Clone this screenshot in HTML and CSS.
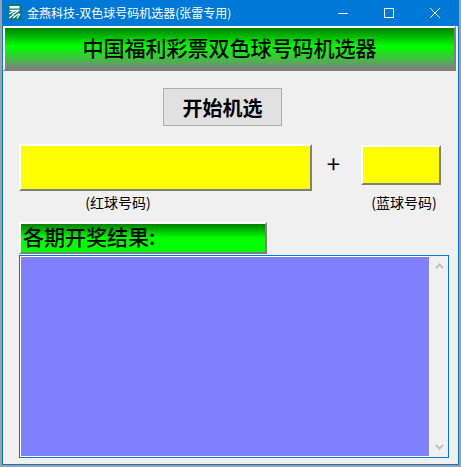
FILE: index.html
```html
<!DOCTYPE html>
<html lang="zh-CN">
<head>
<meta charset="UTF-8" />
<title>金燕科技-双色球号码机选器(张雷专用)</title>
<link rel="stylesheet" href="styles.css">
</head>
<body>
  <div class="window">
    <div class="titlebar">
      <svg class="app-icon" viewBox="0 0 15 16" width="15" height="16">
        <rect width="15" height="16" fill="#0b7a70"/>
        <path d="M2.5 2 H12.5 V4.5 H2.5 Z" fill="#fff"/>
        <path d="M2.5 6.5 H12.5 M2 10 L8 6.5 M5 11 L11 7 M2 14 L7 10.5 M6 14 L12 9.5 M10 14.5 L13 10" stroke="#fff" stroke-width="1.3" fill="none"/>
      </svg>
      <span class="title-text">金燕科技-双色球号码机选器(张雷专用)</span>
      <div class="controls">
        <svg viewBox="0 0 46 22" width="46" height="22"><path d="M18 13.5 H28" stroke="#fff" fill="none"/></svg>
        <svg viewBox="0 0 46 22" width="46" height="22"><rect x="18.5" y="8.5" width="9" height="9" stroke="#fff" fill="none"/></svg>
        <svg viewBox="0 0 46 22" width="46" height="22"><path d="M18 8 L28 18 M28 8 L18 18" stroke="#fff" fill="none"/></svg>
      </div>
    </div>
    <div class="content">
      <h1 class="banner">中国福利彩票双色球号码机选器</h1>
      <button class="start-btn">开始机选</button>
      <div class="balls">
        <div class="ball-col red-col">
          <div class="ball-field red-field"></div>
          <div class="ball-label">(红球号码)</div>
        </div>
        <div class="plus">+</div>
        <div class="ball-col blue-col">
          <div class="ball-field blue-field"></div>
          <div class="ball-label">(蓝球号码)</div>
        </div>
      </div>
      <div class="results-title">各期开奖结果:</div>
      <div class="results-box">
        <div class="results-list"></div>
        <div class="scrollbar">
          <svg viewBox="0 0 9 6" width="9" height="6"><path d="M1 5 L4.5 1.5 L8 5" stroke="#c0c0c0" stroke-width="2" fill="none"/></svg>
          <svg viewBox="0 0 9 6" width="9" height="6"><path d="M1 1 L4.5 4.5 L8 1" stroke="#c0c0c0" stroke-width="2" fill="none"/></svg>
        </div>
      </div>
    </div>
  </div>
</body>
</html>
```
FILE: styles.css
```css
* {
  box-sizing: border-box;
}
html, body {
  height: 100%;
  margin: 0;
  background: #a0a0a0;
  font-family: "Noto Sans CJK SC", sans-serif;
}

.window {
  width: 457px;
  height: 465px;
  margin-left: 2px;
  display: flex;
  flex-direction: column;
  background: #0078d7;
}

.titlebar {
  height: 26px;
  flex: none;
  display: flex;
  align-items: center;
  padding-left: 5px;
  color: #fff;
}

.app-icon {
  margin: -3px 5px 0 0;
}

.title-text {
  font-size: 12px;
  flex: 1;
  margin-top: -2px;
}

.controls {
  display: flex;
  margin: 0 1px 4px 0;
}

.content {
  flex: 1;
  margin: 0 1px 1px;
  background: #f0f0f0;
  display: flex;
  flex-direction: column;
  align-items: flex-start;
}

.banner {
  margin: 0;
  width: 453px;
  height: 45px;
  flex: none;
  text-align: center;
  font-size: 21px;
  line-height: 39px;
  font-weight: 500;
  color: #000;
  background: linear-gradient(#008000, #00ff00 45%, #40c040 75%, #808080);
  border: 2px solid;
  border-color: #fff #808080 #808080 #fff;
}

.start-btn {
  width: 119px;
  height: 38px;
  margin: 17px 0 0 160px;
  padding: 0;
  font: 700 20px "Noto Sans CJK SC", sans-serif;
  color: #000;
  background: #e1e1e1;
  border: 1px solid #adadad;
}

.balls {
  display: flex;
  margin: 18px 0 0 16px;
}

.ball-col {
  display: flex;
  flex-direction: column;
  align-items: center;
}

.ball-field {
  background: #ff0;
  border: 2px solid;
  border-color: #fff #808080 #808080 #fff;
}

.red-field {
  width: 293px;
  height: 47px;
}

.blue-field {
  width: 80px;
  height: 40px;
  margin-top: 1px;
}

.ball-label {
  font-size: 14px;
  line-height: 16px;
  margin-top: 3px;
  color: #000;
}

.red-col .ball-label {
  margin-right: 95px;
}

.blue-col .ball-label {
  margin-top: 9px;
  margin-left: 6px;
}

.plus {
  width: 49px;
  padding-right: 6px;
  text-align: center;
  font-size: 24px;
  line-height: 36px;
  height: 36px;
  margin-top: 1px;
  color: #000;
}

.results-title {
  width: 248px;
  height: 32px;
  margin: 12px 0 0 16px;
  padding-left: 2px;
  font-size: 21px;
  line-height: 24px;
  font-weight: 500;
  color: #000;
  background: linear-gradient(#008000, #00ff00 50%);
  border: 2px solid;
  border-color: #fff #808080 #808080 #fff;
}

.results-box {
  width: 430px;
  height: 203px;
  margin: 1px 0 0 16px;
  display: flex;
  border: 1px solid #0078d7;
  background: #f0f0f0;
}

.results-list {
  flex: 1;
  background: #8080ff;
  border: 1px solid #fff;
}

.scrollbar {
  width: 18px;
  flex: none;
  display: flex;
  flex-direction: column;
  justify-content: space-between;
  align-items: center;
  padding: 7px 0;
}
```
